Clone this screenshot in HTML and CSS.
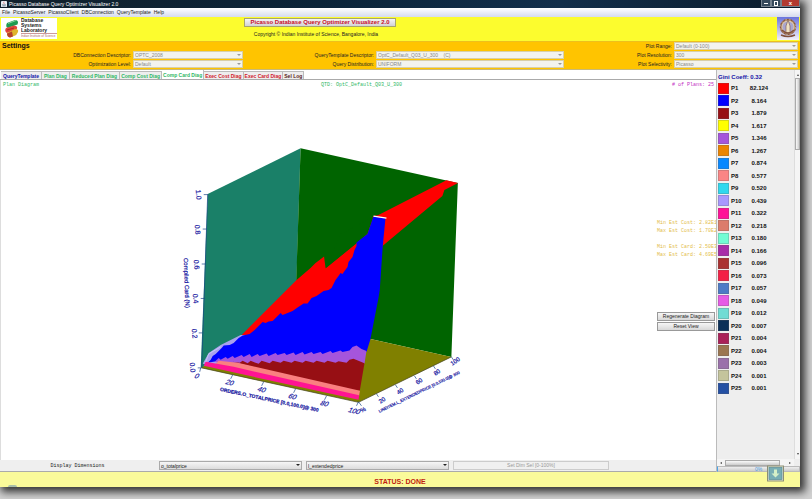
FILE: index.html
```html
<!DOCTYPE html>
<html lang="en">
<head>
<meta charset="utf-8">
<title>Picasso Database Query Optimizer Visualizer 2.0</title>
<link rel="stylesheet" href="styles.css">
</head>
<body>
<div class="window">
  <header class="titlebar">
    <svg class="app-icon" viewBox="0 0 7 7" aria-hidden="true"><rect width="7" height="7" rx="1" fill="#e8eef4"/><path d="M3.5 .8c-1.2 1 .9 1.400 0 2.500" stroke="#d33" fill="none" stroke-width=".7"/><path d="M1.500 4h3.700v1.200H2zM1.500 6h4" stroke="#567" fill="none" stroke-width=".5"/></svg>
    <span class="title">Picasso Database Query Optimizer Visualizer 2.0</span>
    <div class="winctl">
      <button class="min" aria-label="Minimize"></button><button class="max" aria-label="Restore"></button><button class="close" aria-label="Close">x</button>
    </div>
  </header>
  <nav class="menu">
    <a href="#">File</a><a href="#">PicassoServer</a><a href="#">PicassoClient</a><a href="#">DBConnection</a><a href="#">QueryTemplate</a><a href="#">Help</a>
  </nav>
  <div class="banner">
    <div class="lab">
      <svg viewBox="0 0 16 20" aria-hidden="true">
        <path d="M3 5l8-3q3 0 3 2.500T12 7l-8 3Q1 9 3 5z" fill="#1f9a50"/><path d="M4 5.500l8-3" stroke="#7fd09a"/>
        <path d="M2 10l8-2.500q4 .5 3 3T10 13l-7 2Q0 13 2 10z" fill="#e2453a"/><path d="M3 12l7-2" stroke="#b02a22"/>
        <path d="M3 15l8-4q4 0 3 3t-4 4l-4 1.500Q3 19 3 15z" fill="#dfb42c"/><path d="M3 15.500l5-2 1 5-3 1Q3 19 3 15.500z" fill="#b5402c"/>
      </svg>
      <div class="labname"><b>Database<br>Systems<br>Laboratory</b><span>Indian Institute of Science</span></div>
    </div>
    <div class="heading">
      <button class="product">Picasso Database Query Optimizer Visualizer 2.0</button>
      <p>Copyright © Indian Institute of Science, Bangalore, India</p>
    </div>
    <svg class="emblem" viewBox="0 0 22 23" aria-hidden="true">
      <defs><linearGradient id="em" x1="0" y1="0" x2="0" y2="1"><stop offset="0" stop-color="#6a74dd"/><stop offset="1" stop-color="#f4f2f8"/></linearGradient></defs>
      <rect width="22" height="23" fill="url(#em)"/>
      <circle cx="11" cy="10" r="7.500" fill="#dcc7a8" stroke="#8a5a42" stroke-width="1.500"/>
      <circle cx="11" cy="10" r="7.500" fill="none" stroke="#dcc7a8" stroke-width=".7" stroke-dasharray="2 2"/>
      <circle cx="11" cy="10" r="5.500" fill="#a9a5cf"/><path d="M11 3l2 6v7H9V9z" fill="#efe1c3" stroke="#765044" stroke-width=".6"/>
      <path d="M5 13q6 6 12 0M4 18q7 3 14 0" fill="none" stroke="#81503c" stroke-width="1.500"/>
    </svg>
  </div>
  <form class="settings">
    <h2>Settings</h2>
    <label class="c1 r2" for="db">DBConnection Descriptor:</label><span class="pick s1 r2"><select id="db" disabled><option>OPTC_2008</option></select></span>
    <label class="c1 r3" for="lvl">Optimization Level:</label><span class="pick s1 r3"><select id="lvl" disabled><option>Default</option></select></span>
    <label class="c2 r2" for="qt">QueryTemplate Descriptor:</label><span class="pick s2 r2"><select id="qt" disabled><option>OptC_Default_Q03_U_300 &nbsp;&nbsp; (C)</option></select></span>
    <label class="c2 r3" for="qd">Query Distribution:</label><span class="pick s2 r3"><select id="qd" disabled><option>UNIFORM</option></select></span>
    <label class="c3 r1" for="pr">Plot Range:</label><span class="pick s3 r1"><select id="pr" disabled><option>Default (0-100)</option></select></span>
    <label class="c3 r2" for="ps">Plot Resolution:</label><span class="pick s3 r2"><select id="ps" disabled><option>300</option></select></span>
    <label class="c3 r3" for="pv">Plot Selectivity:</label><span class="pick s3 r3"><select id="pv" disabled><option>Picasso</option></select></span>
  </form>
  <div class="work">
    <main class="left">
      <div class="tabs">
        <button class="blue wide">QueryTemplate</button><button class="green wide">Plan Diag</button><button class="green wide">Reduced Plan Diag</button><button class="green">Comp Cost Diag</button><button class="green active">Comp Card Diag</button><button class="red">Exec Cost Diag</button><button class="red">Exec Card Diag</button><button class="dark">Sel Log</button>
      </div>
      <section class="plot">
        <svg class="chart" viewBox="0 80 716 380" role="img" aria-label="Plan diagram">
          <polygon fill="#1a8068" points="207,194 300,148 294,340 200,368"/>
          <polygon fill="#006400" points="300,148 457.500,183 451,357 370,339 294,330"/>
          <polygon fill="#808000" points="200,368 294,322 370,339 451,357 358,402.500"/>
          <polygon fill="#f00" points="241,335 296,280 310,268 315,263 319,260 323.500,256.500 325,268 355,244 373,216 378,215 446,180 457.700,183 444,190 442,196 382,246 370,320 240,340"/>
          <polygon fill="#006400" points="325,268.500 355,244 367,234 373,217 340,234"/>
          <polygon fill="#a9a0ee" points="202,364 208,353 220,345 240,335 247,335 235,344 226,348 214,362 236,362 236,368"/>
          <polygon fill="#00f" points="373,216.500 385,218.500 382.300,246 379.300,290 378,298 370,339 366,352 356,350 330,356 224,360 207,363 210,360 212,356 215,354 218,351 221,348 223,345.500 229,345 233,343 238,338 242,335.500 249,334 254,330 258,326 262,322 265,323 268,321.500 272,321 276,317 280,313 282,315 287,313 292,311 297,307.500 303,303.500 307,303.500 311,298 316,296 323,291 328,290 331,288 335,280 338,276 340,273 342,274 344,271 347,267 348,262 352,257 354,250 356,246 356,242.500 367,234"/>
          <polygon fill="#a555dc" points="214,362 218,358 220,360 225,357 227,359 232,356 234,358 241,355 243,357 249,354 251,357 257,354 259,356 266,353.500 268,356 275,353 277,355 284,353 286,355 293,352.500 295,355 302,352 304,354.500 311,352 313,354 320,352 322,354 330,351 332,353 340,350.500 342,352 349,350.500 352,347 356,345.500 361,349 366,351 364,364 350,368 230,367"/>
          <polygon fill="#970f14" points="232,362 239,363 242,361 247,363.500 250,361 258,364 261,361 269,363.500 272,361 280,363 283,361 291,363 294,361 302,363 305,361 313,363 316,361 324,363 327,361 335,363 338,361.500 346,363 349,360 353,359 364,363.500 359.300,391 340,389"/>
          <polygon fill="#fa8080" points="218,361 237,363 359.500,391 358.500,396.500 214,365"/>
          <polygon fill="#ff1493" points="205,362 233,367 358.700,395.500 358,400 203,366"/>
          <path d="M205 362l3-8 12-7" fill="none" stroke="#c9c4f5"/>
          <path d="M373 216l13 2" stroke="#fff" stroke-width="1.200"/>
          <path d="M201 368L358 402.500 451 357" fill="none" stroke="#444422" stroke-width=".7"/>
          <path d="M207 194L201 368M203 194.500h4M202 229h4M201 264h4M200 298.500h4M198 333h4M197 368h4M200 368l-1 4M232 375l-2 4M263 382l-2 4M295 389l-2 4M326 396l-2 4M358 402l-2 4M358 402l3 4M376 394l2 3M395 385l2 3M414 376l2 3M433 366l2 3M451 357l2 3" fill="none" stroke="#1b4787" stroke-width=".7"/>
          <g class="axis">
            <text transform="translate(195 190) rotate(84)">1.0</text><text transform="translate(194 225) rotate(84)">0.8</text><text transform="translate(193 260) rotate(84)">0.6</text><text transform="translate(192 294) rotate(84)">0.4</text><text transform="translate(191 329) rotate(84)">0.2</text><text transform="translate(189 363) rotate(84)">0.0</text>
            <text class="name" transform="translate(183 258) rotate(88)">Compiled Card (N)</text>
            <text transform="translate(193 378) rotate(13) skewX(-20)">0</text><text transform="translate(224 384) rotate(13) skewX(-20)">20</text><text transform="translate(256 391) rotate(13) skewX(-20)">40</text><text transform="translate(287 398) rotate(13) skewX(-20)">60</text><text transform="translate(319 405) rotate(13) skewX(-20)">80</text><text transform="translate(347 412) rotate(13) skewX(-20)">100</text><text transform="translate(361 413) rotate(-25)" class="small">%</text>
            <text class="long" transform="translate(219 391) rotate(12)">ORDERS.O_TOTALPRICE [0.0,100.0]@ 300</text>
            <text class="small" transform="translate(380 404) rotate(-35)">20</text><text class="small" transform="translate(398 395) rotate(-35)">40</text><text class="small" transform="translate(417 385) rotate(-35)">60</text><text class="small" transform="translate(435 376) rotate(-35)">80</text><text class="small" transform="translate(452 366) rotate(-35)">100</text>
            <text class="deep" transform="translate(379 413) rotate(-26)">LINEITEM.L_EXTENDEDPRICE [0.0,100.0]@ 300</text>
          </g>
        </svg>
        <span class="kind">Plan Diagram</span>
        <span class="qtd">QTD: OptC_Default_Q03_U_300</span>
        <span class="count"># of Plans: 25</span>
        <div class="side">
          <p>Min Est Cost: 2.82E1<br>Max Est Cost: 1.70E2</p>
          <p>Min Est Card: 2.50E3<br>Max Est Card: 4.69E5</p>
          <button>Regenerate Diagram</button>
          <button>Reset View</button>
        </div>
      </section>
      <div class="dims">
        <span class="dimlabel">Display Dimensions</span>
        <span class="pick on"><select aria-label="First dimension"><option>o_totalprice</option></select></span>
        <span class="pick on"><select aria-label="Second dimension"><option>l_extendedprice</option></select></span>
        <button disabled>Set Dim Sel [0-100%]</button>
      </div>
    </main>
    <aside class="legend">
      <div class="scroller">
        <div class="list">
          <h3>Gini Coeff: 0.32</h3>
          <table>
            <tr><td><i class="p1"></i></td><td>P1</td><td>82.124</td></tr>
            <tr><td><i class="p2"></i></td><td>P2</td><td>8.164</td></tr>
            <tr><td><i class="p3"></i></td><td>P3</td><td>1.879</td></tr>
            <tr><td><i class="p4"></i></td><td>P4</td><td>1.617</td></tr>
            <tr><td><i class="p5"></i></td><td>P5</td><td>1.346</td></tr>
            <tr><td><i class="p6"></i></td><td>P6</td><td>1.267</td></tr>
            <tr><td><i class="p7"></i></td><td>P7</td><td>0.874</td></tr>
            <tr><td><i class="p8"></i></td><td>P8</td><td>0.577</td></tr>
            <tr><td><i class="p9"></i></td><td>P9</td><td>0.520</td></tr>
            <tr><td><i class="p10"></i></td><td>P10</td><td>0.439</td></tr>
            <tr><td><i class="p11"></i></td><td>P11</td><td>0.322</td></tr>
            <tr><td><i class="p12"></i></td><td>P12</td><td>0.218</td></tr>
            <tr><td><i class="p13"></i></td><td>P13</td><td>0.180</td></tr>
            <tr><td><i class="p14"></i></td><td>P14</td><td>0.166</td></tr>
            <tr><td><i class="p15"></i></td><td>P15</td><td>0.096</td></tr>
            <tr><td><i class="p16"></i></td><td>P16</td><td>0.073</td></tr>
            <tr><td><i class="p17"></i></td><td>P17</td><td>0.057</td></tr>
            <tr><td><i class="p18"></i></td><td>P18</td><td>0.049</td></tr>
            <tr><td><i class="p19"></i></td><td>P19</td><td>0.012</td></tr>
            <tr><td><i class="p20"></i></td><td>P20</td><td>0.007</td></tr>
            <tr><td><i class="p21"></i></td><td>P21</td><td>0.004</td></tr>
            <tr><td><i class="p22"></i></td><td>P22</td><td>0.004</td></tr>
            <tr><td><i class="p23"></i></td><td>P23</td><td>0.003</td></tr>
            <tr><td><i class="p24"></i></td><td>P24</td><td>0.001</td></tr>
            <tr><td><i class="p25"></i></td><td>P25</td><td>0.001</td></tr>
          </table>
        </div>
        <div class="vbar"><b class="up"></b><div class="vthumb"></div><b class="down"></b></div>
      </div>
      <div class="hbar"><b class="lt"></b><div class="hthumb"></div><b class="rt"></b></div>
      <div class="progress">0%</div>
    </aside>
  </div>
  <footer class="status">STATUS: DONE</footer>
  <svg class="badge" viewBox="0 0 17 16" aria-hidden="true"><rect x=".5" y=".5" width="16" height="15" fill="#dfe5d4" stroke="#8d8f75"/><rect x="2" y="2" width="13" height="12" fill="#79aeb4" stroke="#5a8c98" stroke-width=".7"/><path d="M7 4h3v4h2.500l-4 4-4-4H7z" fill="#d6f0c8"/></svg>
  <i class="orb"></i>
</div>
</body>
</html>
```
FILE: styles.css
```css
* { box-sizing: border-box; }
body {
  margin: 0;
  height: 100vh;
  padding: 0 12px 12px 0;
  background: #d2d2d2;
  font: 5px/8px "Liberation Sans", sans-serif;
  color: #222;
  overflow: hidden;
}
button, select { font: inherit; color: inherit; margin: 0; padding: 0; border-radius: 0; }
h2, h3, p { margin: 0; }
.window {
  position: relative;
  height: 100%;
  display: flex;
  flex-direction: column;
  background: #fff;
  box-shadow: 3px 3px 8px 2px #333;
}

.titlebar { height: 8px; display: flex; align-items: center; gap: 2px; padding-left: 1px; color: #fff; background: linear-gradient(90deg, #12202b, #0b2439 40%, #122f4b 70%, #0b1b2a); }
.app-icon { width: 6px; height: 6px; }
.title { flex: 1; }
.winctl { display: flex; align-self: flex-start; }
.winctl button { position: relative; width: 10px; height: 7px; border: 1px solid #76838f; border-top: 0; background: #35495b; color: #fff; font-size: 6px; line-height: 5px; }
.winctl .close { width: 19px; background: #b23a30; font-weight: bold; }
.min::after, .max::after { content: ""; position: absolute; left: 2px; right: 2px; bottom: 2px; height: 1px; background: #fff; }
.max::after { top: 1px; height: 3px; background: none; border: 1px solid #fff; }

.menu { height: 9px; display: flex; gap: 3px; padding: 0 2px; line-height: 9px; background: linear-gradient(#fff, #d5dbee); }
.menu a { color: #222; text-decoration: none; }

.banner { height: 24px; display: grid; grid-template-columns: 57px 1fr 22px; padding-right: 1px; background: #fcfc2e; }
.lab { display: flex; margin: 1px 0 2px 1px; background: #fff; }
.lab svg { width: 18px; height: 20px; margin-left: 2px; }
.labname { font-size: 5px; line-height: 5px; white-space: nowrap; overflow: hidden; }
.labname b { display: block; color: #222; }
.labname span { display: block; width: 36px; overflow: hidden; font-size: 3px; line-height: 4px; color: #a66; border-top: 1px solid #c99; }
.heading { justify-self: center; padding-right: 194px; text-align: center; }
.heading p { padding-right: 8px; }
.product { display: block; margin: 1px auto 3px; height: 9px; padding: 0 6px; border: 1px solid #a7a56c; background: linear-gradient(#f6f6f6, #d2d2d6); color: #c8102a; font-weight: bold; font-size: 6px; line-height: 7px; white-space: nowrap; }
.emblem { width: 22px; height: 23px; }

.settings {
  display: grid;
  grid-template-columns: 131px 110px 133px 188px 110px 1fr;
  grid-template-rows: repeat(3, 8px);
  row-gap: 1px;
  padding: 0 2px 1px;
  background: #ffc400;
  border-top: 1px solid #edc01c;
  border-bottom: 1px solid #c9b977;
}
.settings h2 { grid-area: 1 / 1; font-size: 7px; line-height: 8px; color: #111; }
.settings label { justify-self: end; padding-right: 2px; white-space: nowrap; }
.r1 { grid-row: 1; } .r2 { grid-row: 2; } .r3 { grid-row: 3; }
.c1 { grid-column: 1; } .s1 { grid-column: 2; }
.c2 { grid-column: 3; } .s2 { grid-column: 4; }
.c3 { grid-column: 5; } .s3 { grid-column: 6; }
.pick { position: relative; display: block; }
.pick select { display: block; width: 100%; height: 8px; padding: 0 1px; appearance: none; border: 1px solid #d8cfa8; background: #f3f3ee; color: #888; opacity: 1; line-height: 6px; }
.pick::after { content: ""; position: absolute; right: 2px; top: 3px; border: 2px solid transparent; border-top-color: #999; border-bottom: 0; }

.work { flex: 1; min-height: 0; display: grid; grid-template-columns: 1fr 84px; }
.left { display: flex; flex-direction: column; min-width: 0; min-height: 0; }
.tabs { height: 10px; display: flex; align-items: flex-end; padding-left: 1px; border-bottom: 1px solid #aaa; }
.tabs button { height: 8px; padding: 0 1px; border: 1px solid #bbb; border-width: 1px 1px 0 0; background: #eee; font-weight: bold; line-height: 8px; white-space: nowrap; }
.tabs .wide { padding: 0 2px; }
.tabs .active { height: 9px; background: #fff; border-top: 0; }
.tabs .blue { color: #1414a8; }
.tabs .green { color: #2fb865; }
.tabs .red { color: #d01a2c; }
.tabs .dark { color: #5a2020; }

.plot { flex: 1; min-height: 0; display: grid; grid-template-columns: 1fr 1fr 1fr; grid-template-rows: 10px 1fr; font: 5px/8px "Liberation Mono", monospace; border-left: 1px solid #ddd; overflow: hidden; }
.plot > span { grid-row: 1; padding: 1px 2px 0; }
.kind { grid-column: 1; color: #2fb865; }
.plot > .qtd { grid-column: 2; padding-left: 8px; text-align: center; color: #2fb865; }
.count { grid-column: 3; text-align: right; color: #c22cc2; }
.chart { grid-area: 1 / 1 / 3 / 4; width: 100%; height: 100%; min-height: 0; }
.axis { font: 7px "Liberation Sans", sans-serif; fill: #1414a0; stroke: #1414a0; stroke-width: .2px; }
.axis .name { font-size: 6px; }
.axis .long { font-size: 5px; font-weight: bold; }
.axis .small { font-size: 6px; }
.axis .deep { font-size: 4px; }
.side { grid-area: 2 / 3; justify-self: end; width: 59px; margin-top: 129px; color: #e3bd4a; white-space: nowrap; }
.side p { margin-bottom: 8px; }
.side button { display: block; width: 58px; height: 9px; margin-bottom: 1px; border: 1px solid #999; background: linear-gradient(#f6f6f6, #d8d8d8); color: #222; font: 5px/7px "Liberation Sans", sans-serif; }
.side p + button { margin-top: 53px; }

.dims { height: 12px; display: grid; grid-template-columns: 155px 143px 143px 156px; align-items: center; background: #efefef; border-bottom: 1px solid #aaa; column-gap: 4px; }
.dimlabel { text-align: center; font-family: "Liberation Mono", monospace; }
.dims .on select { height: 9px; border-color: #aaa; background: linear-gradient(#f6f6f6, #dcdcdc); color: #222; }
.dims .on::after { border-top-color: #222; }
.dims button { height: 9px; border: 1px solid #ccc; background: #f0f0f0; color: #999; line-height: 7px; }

.legend { display: flex; flex-direction: column; min-width: 0; min-height: 0; background: #eee; border-left: 1px solid #bbb; }
.scroller { flex: 1; min-height: 0; display: flex; }
.list { flex: 1; padding: 2px 0 0 1px; overflow: hidden; }
.list h3 { height: 10px; font-size: 6px; line-height: 10px; color: #1414a8; white-space: nowrap; }
table { border-collapse: collapse; font-weight: bold; font-size: 6px; line-height: 8px; color: #111; }
tr { height: 12px; }
tr:nth-child(even) { height: 13px; }
td { padding: 0; vertical-align: middle; }
td:nth-child(1) { width: 13px; }
td:nth-child(2) { width: 18px; }
td:nth-child(3) { width: 20px; text-align: center; }
td i { display: block; width: 11px; height: 11px; border: 1px solid rgba(90, 90, 90, .25); }
.p1 { background: #f00; } .p2 { background: #00f; } .p3 { background: #970f14; } .p4 { background: #ff0; } .p5 { background: #a555dc; }
.p6 { background: #ec8500; } .p7 { background: #0888ff; } .p8 { background: #fa8585; } .p9 { background: #30d8ee; } .p10 { background: #a898ff; }
.p11 { background: #ff1098; } .p12 { background: #dc7c6c; } .p13 { background: #72fcd4; } .p14 { background: #a82ca8; } .p15 { background: #aa3030; }
.p16 { background: #f32045; } .p17 { background: #4d7bc6; } .p18 { background: #e65be6; } .p19 { background: #70dcd4; } .p20 { background: #0c3058; }
.p21 { background: #aa2058; } .p22 { background: #9b7650; } .p23 { background: #9a70aa; } .p24 { background: #c4c49c; } .p25 { background: #2450a4; }
.vbar { width: 6px; display: flex; flex-direction: column; align-items: center; background: #f5f5f5; border-left: 1px solid #ddd; padding: 3px 0; }
.vthumb { width: 5px; height: 72px; margin-top: 2px; border: 1px solid #aaa; background: linear-gradient(90deg, #fafafa, #ccc); }
.vbar b, .hbar b { border: 1px solid transparent; }
.vbar .up { border-bottom: 2px solid #444; }
.vbar .down { border-top: 2px solid #444; margin-top: auto; }
.hbar { height: 7px; width: 77px; display: flex; align-items: center; padding: 0 2px; background: #f5f5f5; }
.hthumb { width: 55px; height: 6px; margin-left: 3px; border: 1px solid #aaa; background: linear-gradient(#fafafa, #ccc); }
.hbar .lt { border-right: 2px solid #444; }
.hbar .rt { border-left: 2px solid #444; margin-left: auto; }
.progress { height: 6px; line-height: 4px; text-align: center; color: #4a9be0; border: 1px solid #bbb; border-left: 1px solid #4aa3e8; background: linear-gradient(#eee, #ccc); }

.status { height: 15px; padding-top: 2px; text-align: center; font-weight: bold; font-size: 7px; line-height: 15px; color: #c01c10; background: #fafa9a; }
.badge { position: absolute; right: 16px; bottom: 5px; width: 17px; height: 17px; }
.orb { position: absolute; left: 8px; bottom: 0; width: 9px; height: 2px; border-radius: 5px 5px 0 0; background: #a9bfa8; }
```
